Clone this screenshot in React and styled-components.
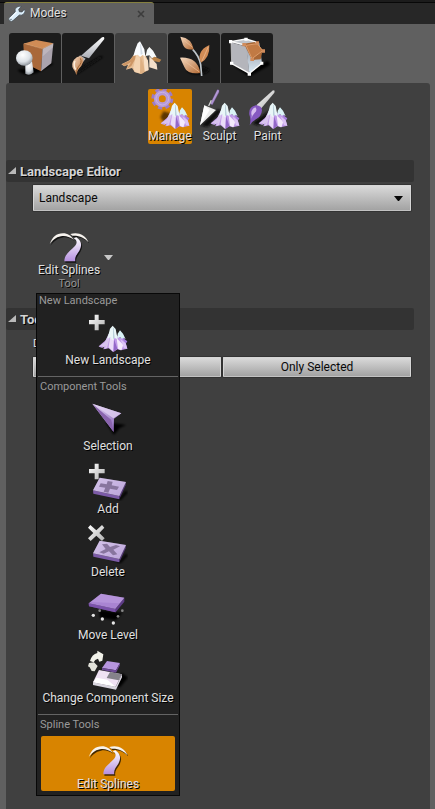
import React from "react";
import styled, { createGlobalStyle, css } from "styled-components";

const GlobalStyle = createGlobalStyle`
  *, *::before, *::after { box-sizing: border-box; }
  body {
    margin: 0;
    background: #606060;
    color: #e0e0e0;
    font: 12px/15px Roboto, "Liberation Sans", sans-serif;
  }
  button, select { font: inherit; color: inherit; }
`;

const Window = styled.div`
  display: flex;
  flex-direction: column;
  min-height: 100vh;
  background: #606060;
`;

const TabStrip = styled.header`
  display: flex;
  height: 24px;
  padding: 0 4px;
  background: #272727;
  border-top: 2px solid #1c1c1c;
  box-shadow: inset 0 1px 0 #080808;
`;

const Tab = styled.div`
  display: flex;
  align-items: center;
  gap: 5px;
  width: 150px;
  padding: 0 8px 0 4px;
  background: #606060;
  border-top: 1px solid #85803f;
  border-radius: 3px 3px 0 0;
  text-shadow: 1px 1px 0 #111;
`;

const TabTitle = styled.h1`
  flex: 1;
  margin: 0;
  font-size: 12px;
  font-weight: 400;
`;

const CloseButton = styled.button`
  display: flex;
  padding: 1px;
  border: 0;
  background: none;
  color: #3c3c3c;
`;

const ModeBar = styled.nav`
  display: flex;
  gap: 1px;
  padding: 9px 9px 0;
`;

const ModeButton = styled.button`
  display: flex;
  width: 52px;
  height: 50px;
  padding: 0;
  border: 0;
  border-radius: 3px 3px 0 0;
  background: ${(p) => (p.$active ? "#404040" : "#1c1c1c")};
`;

const Panel = styled.main`
  flex: 1;
  margin: 0 5px 0 6px;
  padding: 6px 0 0;
  background: #404040;
  border-radius: 3px 3px 0 0;
`;

const ToolRow = styled.div`
  display: flex;
  justify-content: center;
  gap: 8px;
  margin-bottom: 16px;
`;

const active = css`
  background: #d88400;
  border-radius: 2px;
`;

const ToolButton = styled.button`
  display: flex;
  flex-direction: column;
  align-items: center;
  min-width: 40px;
  height: 55px;
  padding: 0;
  border: 0;
  background: none;
  white-space: nowrap;
  text-shadow: 1px 1px 0 #000;
  > svg { flex: none; }
  ${(p) => p.$active && active}
`;

const Sub = styled.span`
  margin-top: -1px;
  font-size: 11px;
  line-height: 14px;
  color: #959595;
`;

const Section = styled.section`
  margin-right: 16px;
`;

const SectionTitle = styled.h2`
  display: flex;
  align-items: center;
  gap: 4px;
  height: 22px;
  margin: 0;
  padding-left: 2px;
  background: #333;
  border-radius: 2px;
  font-size: 13px;
  font-weight: 700;
  color: #d4d4d4;
  text-shadow: 1px 1px 0 #000;
`;

const SectionBody = styled.div`
  padding: 3px 3px 0 27px;
`;

const raised = css`
  border: 1px solid #d6d6d6;
  border-bottom-color: #c2c2c2;
  border-radius: 1px;
  background: linear-gradient(#d9d9d9, #a3a3a3);
  box-shadow: 0 0 0 1px #333;
  color: #080808;
`;

const SelectBox = styled.div`
  display: grid;
  align-items: center;
  > * { grid-area: 1 / 1; }
  > svg { justify-self: end; margin-right: 8px; pointer-events: none; }
`;

const Select = styled.select`
  ${raised}
  appearance: none;
  width: 100%;
  height: 26px;
  padding: 0 5px;
`;

const ToolPicker = styled.div`
  position: relative;
  display: flex;
  align-items: flex-start;
  gap: 4px;
  width: max-content;
  height: 68px;
  margin: 12px 0 17px 5px;
`;

const PickerButton = styled(ToolButton)`
  height: 68px;
`;

const CaretButton = styled.button`
  display: flex;
  margin-top: 32px;
  padding: 0;
  border: 0;
  background: none;
  color: #c8c8c8;
`;

const Menu = styled.div`
  position: absolute;
  z-index: 1;
  top: 70px;
  left: -2px;
  width: 144px;
  border: 1px solid #080808;
  background: #212121;
`;

const MenuGroup = styled.section`
  display: flex;
  flex-direction: column;
  & + & {
    margin: 5px 1px 0;
    padding-top: 3px;
    border-top: 1px solid #646464;
  }
`;

const MenuTitle = styled.h3`
  margin: 0;
  padding-left: 2px;
  font-size: 11px;
  line-height: 14px;
  font-weight: 400;
  color: #9a9a9a;
`;

const MenuItem = styled(ToolButton)`
  justify-content: flex-start;
  gap: 1px;
  margin: 4px 3px;
  & + & { margin-top: 4px; }
`;

const FieldLabel = styled.p`
  margin: 0;
  padding: 3px 0 6px;
  font-size: 11px;
  text-shadow: 1px 1px 0 #000;
`;

const ButtonPair = styled.div`
  display: grid;
  grid-template-columns: 1fr 1fr;
  gap: 2px;
`;

const FlatButton = styled.button`
  ${raised}
  height: 20px;
  padding: 0;
`;

const Wrench = () => (
  <svg width="17" height="16" viewBox="24 15 51 48" aria-hidden="true">
    <path d="M29 59q-6-5 0-10l17-17q-3-8 4-13 7-5 14-3l-8 9 2 7 8 1 8-9q3 9-3 15-6 5-13 3L40 58q-5 6-11 1Z" fill="#dceefa" stroke="#39434a" strokeWidth="2" />
    <path d="m30 53 20-20" stroke="#fff" strokeWidth="3" />
    <circle cx="33" cy="55" r="2" fill="#40515d" />
  </svg>
);

const Cross = () => (
  <svg width="8" height="8" viewBox="0 0 8 8" aria-hidden="true">
    <path d="m1 1 6 6M7 1 1 7" stroke="currentColor" strokeWidth="1.6" />
  </svg>
);

const Caret = ({ fill = "currentColor" }) => (
  <svg width="9" height="5" viewBox="0 0 9 5" aria-hidden="true">
    <path d="M0 0h9L5 5H4Z" fill={fill} />
  </svg>
);

const Expander = () => (
  <svg width="8" height="8" viewBox="0 0 8 8" aria-hidden="true">
    <path d="M8 0v7H0Z" fill="#b9b9b9" />
  </svg>
);

const ModeArt = ({ box, children }) => (
  <svg width="52" height="50" viewBox={box} aria-hidden="true">
    <defs>
      <linearGradient id="tan" x1="0" y1="0" x2="1" y2="1">
        <stop stopColor="#f6dcc4" />
        <stop offset="1" stopColor="#b36a34" />
      </linearGradient>
      <linearGradient id="steel" x1="0" y1="0" x2="0" y2="1">
        <stop stopColor="#fff" />
        <stop offset="1" stopColor="#a9acb4" />
      </linearGradient>
      <linearGradient id="ice" x1="0" y1="0" x2="0" y2="1">
        <stop offset=".3" stopColor="#a8adb6" />
        <stop offset="1" stopColor="#d9ebf8" />
      </linearGradient>
      <radialGradient id="ball" cx=".4" cy=".3" r=".75">
        <stop stopColor="#fff" />
        <stop offset=".6" stopColor="#dce1e6" />
        <stop offset="1" stopColor="#858b92" />
      </radialGradient>
      <filter id="soft" x="-50%" y="-50%" width="200%" height="200%">
        <feGaussianBlur stdDeviation="3" />
      </filter>
    </defs>
    {children}
  </svg>
);

const PlaceArt = () => (
  <ModeArt box="27 15 156 150">
    <path d="M52 125q22 26 64 8l44-25-10-8-60 20Z" fill="#050505" filter="url(#soft)" />
    <path d="m70 47 38-11 52 10-32 16Z" fill="#d08c56" />
    <path d="m70 47 58 15-5 68-50-25Z" fill="#a9683a" />
    <path d="m128 62 32-16-6 60-31 24Z" fill="#aaa3ad" />
    <path d="m128 62 32-16-1 12-32 28Z" fill="#d0c8cc" opacity=".5" />
    <path d="m73 47 54 15 31-15" fill="none" stroke="#e0a675" strokeWidth="2" />
    <path d="m76 108 20-8 5 33q-11 12-25 4Z" fill="url(#ball)" />
    <ellipse cx="73" cy="90" rx="25" ry="23" fill="url(#ball)" />
  </ModeArt>
);

const BrushArt = () => (
  <ModeArt box="186 15 156 150">
    <path d="m240 120 62-36 8 3-60 40-22 14Z" fill="#0a0a0a" filter="url(#soft)" />
    <path d="m306 28 6-1 1 6-46 58-24-8Z" fill="url(#steel)" />
    <path d="m240 82 17 10-10 12-14-12Z" fill="#b5b9bd" />
    <path d="M229 142q-1-10-9-19-8-14 2-28 10-13 21-10 11 6 6 18-4 13-13 20-6 6-7 19Z" fill="url(#tan)" />
    <path d="M241 91q7 12-6 25-6 9-5 21" fill="none" stroke="#a16534" strokeWidth="3" />
    <path d="M225 99q-6 13 2 26" fill="none" stroke="#fff0de" strokeWidth="4" />
  </ModeArt>
);

const PeaksArt = () => (
  <ModeArt box="9 15 156 150">
    <path d="M112 57 124 72 131 88 148 95 142 103 120 98Z" fill="#b98349" />
    <path d="M112 84 134 108 136 125 112 118Z" fill="#f4dfc9" />
    <path d="M72 72 54 96 28 109 37 115 48 110 42 125 60 120 68 132 86 138 109 127 108 98 96 72Z" fill="#e6bd94" />
    <path d="M72 74 52 98 30 109 38 114 58 102 44 123 58 114 70 92Z" fill="#cd9665" />
    <path d="M74 76 64 118 68 132 84 136 84 90Z" fill="#f3d3b1" />
    <path d="M86 86 84 137 90 137 100 130Z" fill="#deb083" />
    <path d="M94 80 98 130 110 126 108 98Z" fill="#f7dfc6" />
    <path d="M84 40 77 46 70 64 64 84 77 80 84 87 92 81 100 86 97 64Z" fill="#fafcff" />
    <path d="M112 57 105 66 101 84 112 82 120 91 127 86 134 88 123 68Z" fill="#f6fafc" />
    <path d="M84 48 86 80 92 78 87 50Z" fill="#d3dce5" />
  </ModeArt>
);

const LeafArt = () => (
  <ModeArt box="168 15 156 150">
    <ellipse cx="258" cy="127" rx="34" ry="12" fill="#090909" filter="url(#soft)" />
    <path d="M242 64q20 21 24 46l3 34" fill="none" stroke="#bec5ca" strokeWidth="5" />
    <path d="M205 26q34 4 40 38-25 4-32-13Z" fill="url(#tan)" />
    <path d="M292 51q2 38-25 53-8-12-2-28 6-16 27-25Z" fill="#d28c56" />
    <path d="M204 89q52-3 61 45-18 4-34-2-10-4-14-15Z" fill="url(#tan)" />
    <path d="m207 30 35 28M289 56l-19 43M209 93l52 38" stroke="#f1c199" strokeWidth="2" />
  </ModeArt>
);

const GeometryArt = () => (
  <ModeArt box="327 15 156 150">
    <path d="M362 111 412 146 474 110 468 98 410 130Z" fill="#050505" filter="url(#soft)" />
    <path d="M356 41 402 33 440 44 402 56Z" fill="#bfc3c9" />
    <path d="M357 43 404 56 412 136 359 106Z" fill="#b4b5bb" />
    <path d="M402 54 442 44 450 106 412 136Z" fill="url(#ice)" />
    <path d="M356 41 402 33 432 42M357 41 392 49M358 106 412 136 450 106" fill="none" stroke="#fafafa" strokeWidth="4" />
    <path d="M357 44 359 106" stroke="#dadada" strokeWidth="2" />
    <path d="M396 47 428 42 452 67 446 94 420 96Z" fill="#a96735" />
    <path d="M402 52 436 47 452 68 420 92Z" fill="#c17a44" stroke="#dc9b69" strokeWidth="3" />
    <path d="M351 36h10v10h-10ZM397 29h10v9h-10ZM354 101h10v9h-10ZM407 134h10v9h-10ZM445 101h9v9h-9Z" fill="#fff" />
    <path d="M391 45h11v10h-11ZM431 40h10v10h-10ZM449 64h10v10h-10ZM415 90h11v9h-11Z" fill="#d08c5c" />
  </ModeArt>
);

const Art = ({ children }) => (
  <svg width="40" height="40" viewBox="0 0 120 120" aria-hidden="true">
    <defs>
      <linearGradient id="violet" x1="0" y1="0" x2="1" y2="1">
        <stop stopColor="#e6d9f5" />
        <stop offset="1" stopColor="#8058b4" />
      </linearGradient>
      <linearGradient id="silver" x1="0" y1="0" x2="1" y2="1">
        <stop stopColor="#fff" />
        <stop offset="1" stopColor="#b0b0b0" />
      </linearGradient>
      <linearGradient id="river" x1="0" y1="0" x2="0" y2="1">
        <stop stopColor="#fff" />
        <stop offset="1" stopColor="#b58ee0" />
      </linearGradient>
      <filter id="haze" x="-50%" y="-50%" width="200%" height="200%">
        <feGaussianBlur stdDeviation="3" />
      </filter>
    </defs>
    {children}
  </svg>
);

const MiniPeaks = () => (
  <g>
    <path d="m96 56 9 13 5 13 8 6-5 8-14-3Z" fill="#a47ddb" />
    <path d="M65 64 54 84 32 103 40 107 48 104 46 112 62 109 76 120 88 112 98 115 118 110 114 96 104 82 84 68Z" fill="#c09be8" />
    <path d="m62 65-12 26-18 13 13-2-4 6 12-6-4 10 8-4 10-38Z" fill="#d9c4f0" />
    <path d="m66 77-4 29 13 13 3-38Z" fill="#eadcf8" />
    <path d="m78 81-1 38 11-9Z" fill="#9368c8" />
    <path d="m86 79 4 31 10 5 6-17Z" fill="#f4eafb" />
    <path d="m97 82 11 26 10 2-5-16Z" fill="#dcc3f4" />
    <path d="m74 41-8 9-8 31 8-5 7 9 7-7 9 4-6-31Z" fill="#e9f6f8" />
    <path d="m96 55-7 10-1 14 8-4 6 6 5-4 6 5-8-17Z" fill="#d9f3f6" />
    <path d="m75 47 0 34 5-4-3-29Z" fill="#b9cfda" />
  </g>
);

const PlusSign = () => (
  <path d="M20 8h12v16h18v13H32v18H20V37H3V24h17Z" fill="url(#silver)" />
);

const Slab = ({ children }) => (
  <g>
    <path d="m44 99 54 19 22-24-7-5-18 22Z" fill="#050505" filter="url(#haze)" />
    <path d="m15 88 79 17v10L16 98Z" fill="#7c5ba7" />
    <path d="m94 105 20-42-1 10-19 42Z" fill="#55397b" />
    <path d="m35 50 79 13-20 42-79-17Z" fill="#cfbde6" />
    <path d="m35 50 79 13-20 42-79-17Z" fill="url(#violet)" opacity=".25" />
    {children}
  </g>
);

const riverPath =
  "M74 46C84 51 86 60 77 70C66 83 46 92 46 115H79C76 102 84 94 91 83C100 66 98 54 82 43Z";
const leftArc = "M2 64C10 42 22 31 42 31C56 31 66 38 74 50C60 41 48 37 36 40C20 43 10 52 2 64Z";
const rightArc = "M64 33C86 26 108 34 119 58C106 44 92 37 70 38Z";

const SplineArt = () => (
  <Art>
    <g fill="#000" opacity=".7" transform="translate(3 4)">
      <path d={riverPath} />
      <path d={leftArc} />
      <path d={rightArc} />
    </g>
    <path d={riverPath} fill="url(#river)" />
    <path d={leftArc} fill="#f7f3ee" />
    <path d={rightArc} fill="#f7f3ee" />
  </Art>
);

const ManageArt = () => (
  <Art>
    <path d="m40 67 30 8-15 26-16-4-8-12Z" fill="#2b1900" opacity=".7" filter="url(#haze)" />
    <MiniPeaks />
    <circle cx="37" cy="29" r="27" fill="none" stroke="#9d7bc6" strokeWidth="12" strokeDasharray="12 9.2" />
    <circle cx="37" cy="29" r="18" fill="none" stroke="#b79ad8" strokeWidth="15" />
    <circle cx="37" cy="29" r="19" fill="none" stroke="#cab3e4" strokeWidth="3" />
  </Art>
);

const SculptArt = () => (
  <Art>
    <path d="m2 110 50-49 14 4-42 49Z" fill="#111" filter="url(#haze)" />
    <MiniPeaks />
    <path d="m52 2 5 1 0 6-20 38-6-3Z" fill="url(#violet)" stroke="#75549d" strokeWidth="1" />
    <path d="m34 34-8 17" stroke="#d4d4d4" strokeWidth="4" />
    <path d="m13 49 35 14-29 28L0 109Z" fill="#ececec" />
    <path d="m13 49 16 14L0 109Z" fill="#fff" />
  </Art>
);

const PaintArt = () => (
  <Art>
    <path d="m12 103 48-36 9 4-38 39Z" fill="#111" filter="url(#haze)" />
    <MiniPeaks />
    <path d="m75 4 5 1-1 6-39 47-15-9Z" fill="url(#silver)" />
    <path d="M5 109q5-18-1-32-3-24 20-28 18 1 18 15-2 19-17 26-14 7-20 19Z" fill="#8659c1" />
    <path d="M11 79q-5-16 11-24 8 8-3 18-8 8-8 17Z" fill="#d7beef" />
  </Art>
);

const NewArt = () => (
  <Art>
    <PlusSign />
    <MiniPeaks />
  </Art>
);

const SelectionArt = () => (
  <Art>
    <path d="m52 72 62 9-19 9-17 21Z" fill="#050505" filter="url(#haze)" />
    <path d="M13 17 100 46 78 62 77 102Z" fill="url(#violet)" />
    <path d="M13 17 77 102 70 66Z" fill="#8a64ae" />
    <path d="M15 18 76 61 100 46Z" fill="#e0d0f1" opacity=".8" />
  </Art>
);

const AddArt = () => (
  <Art>
    <Slab>
      <path d="m59 60 15 2-3 11 22 4-6 10-21-4-5 12-14-3 5-12-19-3 5-10 18 3Z" fill="#88759e" />
    </Slab>
    <PlusSign />
  </Art>
);

const DeleteArt = () => (
  <Art>
    <Slab>
      <path d="M42 61 57 59 66 69 84 63 96 67 76 77 88 91 75 94 63 82 47 89 34 85 53 75Z" fill="#88759e" />
    </Slab>
    <path d="m7 3 18 16L42 3l7 8-15 16 16 16-8 8-17-16L8 51 0 43l16-16L0 11Z" fill="url(#silver)" />
  </Art>
);

const MoveArt = () => (
  <Art>
    <path d="m33 69 70 8-20 23-47-8Z" fill="#050505" filter="url(#haze)" />
    <path d="m2 49 80 17 27-34v12L83 76 3 58Z" fill="#5d3b86" />
    <path d="m2 49 80 17v10L3 58Z" fill="#7b52aa" />
    <path d="m39 20 70 12-27 34L2 49Z" fill="#a984d2" />
    <path d="m39 20 70 12-14 17-86-4Z" fill="#c4a6e4" opacity=".45" />
    <g fill="#e6e6e6">
      <circle cx="16" cy="85" r="5" />
      <circle cx="43" cy="96" r="5" />
      <circle cx="76" cy="108" r="5" />
      <circle cx="35" cy="71" r="4" fill="#888" />
      <circle cx="90" cy="88" r="4" fill="#888" />
      <circle cx="103" cy="71" r="4" fill="#888" />
    </g>
  </Art>
);

const ResizeArt = () => (
  <Art>
    <path d="m69 109 27 3 24-29-17-14Z" fill="#050505" filter="url(#haze)" />
    <path d="m15 97 68 13 19-37v9L84 119 15 105Z" fill="#d8d5de" />
    <path d="m33 60 69 13-19 37-68-13Z" fill="#efe1f3" />
    <path d="m66 66 36 7-10 18-36-7Z" fill="#85828a" />
    <path d="m26 83 32 6 25 21-68-13Z" fill="#fff" />
    <path d="m57 33 39 6-12 22-42-7Z" fill="#b795df" />
    <path d="m42 54 42 7 12-22v6L84 68 42 60Z" fill="#6e4a96" />
    <path d="M6 33Q12 12 28 9V2L46 13 43 32 34 35 30 26Q20 28 17 37Z" fill="#f1f1e9" />
    <path d="M3 39 18 37 29 48 20 64 11 63 5 52 0 49Z" fill="#e2e2da" />
  </Art>
);

const modes = [
  { name: "Place", Icon: PlaceArt },
  { name: "Paint", Icon: BrushArt },
  { name: "Landscape", Icon: PeaksArt, active: true },
  { name: "Foliage", Icon: LeafArt },
  { name: "Geometry Editing", Icon: GeometryArt },
];

const tools = [
  { label: "Manage", Icon: ManageArt, active: true },
  { label: "Sculpt", Icon: SculptArt },
  { label: "Paint", Icon: PaintArt },
];

const menuGroups = [
  { title: "New Landscape", items: [{ label: "New Landscape", Icon: NewArt }] },
  {
    title: "Component Tools",
    items: [
      { label: "Selection", Icon: SelectionArt },
      { label: "Add", Icon: AddArt },
      { label: "Delete", Icon: DeleteArt },
      { label: "Move Level", Icon: MoveArt },
      { label: "Change Component Size", Icon: ResizeArt },
    ],
  },
  { title: "Spline Tools", items: [{ label: "Edit Splines", Icon: SplineArt, active: true }] },
];

export default function App() {
  return (
    <Window>
      <GlobalStyle />
      <TabStrip>
        <Tab>
          <Wrench />
          <TabTitle>Modes</TabTitle>
          <CloseButton aria-label="Close tab"><Cross /></CloseButton>
        </Tab>
      </TabStrip>
      <ModeBar>
        {modes.map(({ name, Icon, active }) => (
          <ModeButton key={name} aria-label={name} aria-pressed={!!active} $active={active}>
            <Icon />
          </ModeButton>
        ))}
      </ModeBar>
      <Panel>
        <ToolRow>
          {tools.map(({ label, Icon, active }) => (
            <ToolButton key={label} $active={active}>
              <Icon />
              <span>{label}</span>
            </ToolButton>
          ))}
        </ToolRow>
        <Section>
          <SectionTitle><Expander />Landscape Editor</SectionTitle>
          <SectionBody>
            <SelectBox>
              <Select aria-label="Landscape">
                <option>Landscape</option>
              </Select>
              <Caret fill="#080808" />
            </SelectBox>
            <ToolPicker>
              <PickerButton>
                <SplineArt />
                <span>Edit Splines</span>
                <Sub>Tool</Sub>
              </PickerButton>
              <CaretButton aria-label="Choose tool" aria-expanded="true"><Caret /></CaretButton>
              <Menu>
                {menuGroups.map(({ title, items }) => (
                  <MenuGroup key={title}>
                    <MenuTitle>{title}</MenuTitle>
                    {items.map(({ label, Icon, active }) => (
                      <MenuItem key={label} $active={active}>
                        <Icon />
                        <span>{label}</span>
                      </MenuItem>
                    ))}
                  </MenuGroup>
                ))}
              </Menu>
            </ToolPicker>
          </SectionBody>
        </Section>
        <Section>
          <SectionTitle><Expander />Tool Settings</SectionTitle>
          <SectionBody>
            <FieldLabel>Deform Landscape to Splines:</FieldLabel>
            <ButtonPair>
              <FlatButton>All Splines</FlatButton>
              <FlatButton>Only Selected</FlatButton>
            </ButtonPair>
          </SectionBody>
        </Section>
      </Panel>
    </Window>
  );
}
